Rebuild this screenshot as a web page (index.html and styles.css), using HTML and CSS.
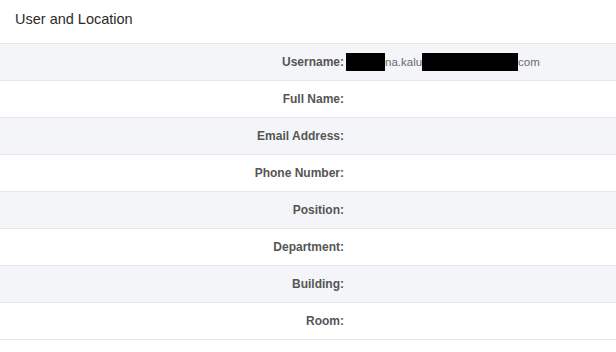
FILE: index.html
```html
<!DOCTYPE html>
<html lang="en">
  <head>
    <meta charset="UTF-8" />
    <meta name="viewport" content="width=device-width, initial-scale=1.0" />
    <title>User and Location</title>
    <link rel="stylesheet" href="styles.css">
  </head>
  <body>
    <h2 class="section-title">User and Location</h2>
    <div class="info-list">
      <div class="info-row">
        <span class="info-label">Username:</span>
        <span class="info-value"><span class="redact redact-a"></span>na.kalu<span class="redact redact-b"></span>com</span>
      </div>
      <div class="info-row">
        <span class="info-label">Full Name:</span>
        <span class="info-value"></span>
      </div>
      <div class="info-row">
        <span class="info-label">Email Address:</span>
        <span class="info-value"></span>
      </div>
      <div class="info-row">
        <span class="info-label">Phone Number:</span>
        <span class="info-value"></span>
      </div>
      <div class="info-row">
        <span class="info-label">Position:</span>
        <span class="info-value"></span>
      </div>
      <div class="info-row">
        <span class="info-label">Department:</span>
        <span class="info-value"></span>
      </div>
      <div class="info-row">
        <span class="info-label">Building:</span>
        <span class="info-value"></span>
      </div>
      <div class="info-row">
        <span class="info-label">Room:</span>
        <span class="info-value"></span>
      </div>
    </div>
  </body>
</html>
```

FILE: styles.css
```css
body {
  margin: 0;
  background-color: #fff;
  font-family: "Liberation Sans", Arial, sans-serif;
  color: #333;
}

.section-title {
  margin: 0;
  height: 43px;
  padding: 11px 15px 0;
  box-sizing: border-box;
  font-size: 14.5px;
  font-weight: normal;
  color: #2b2b2b;
}

.info-list {
  border-top: 1px solid #e4e6ea;
}

.info-row {
  display: grid;
  grid-template-columns: 344px 1fr;
  column-gap: 2px;
  align-items: center;
  height: 36px;
  border-bottom: 1px solid #e4e6ea;
  font-size: 12px;
}

.info-row:nth-child(odd) {
  background-color: #f4f5f8;
}

.info-label {
  text-align: right;
  font-weight: bold;
  color: #555;
}

.info-value {
  display: flex;
  align-items: center;
  font-size: 11.5px;
  color: #6a6a6a;
}

.redact {
  display: inline-block;
  height: 18px;
  background-color: #000;
}

.redact-a {
  width: 39px;
}

.redact-b {
  width: 96px;
}
```
